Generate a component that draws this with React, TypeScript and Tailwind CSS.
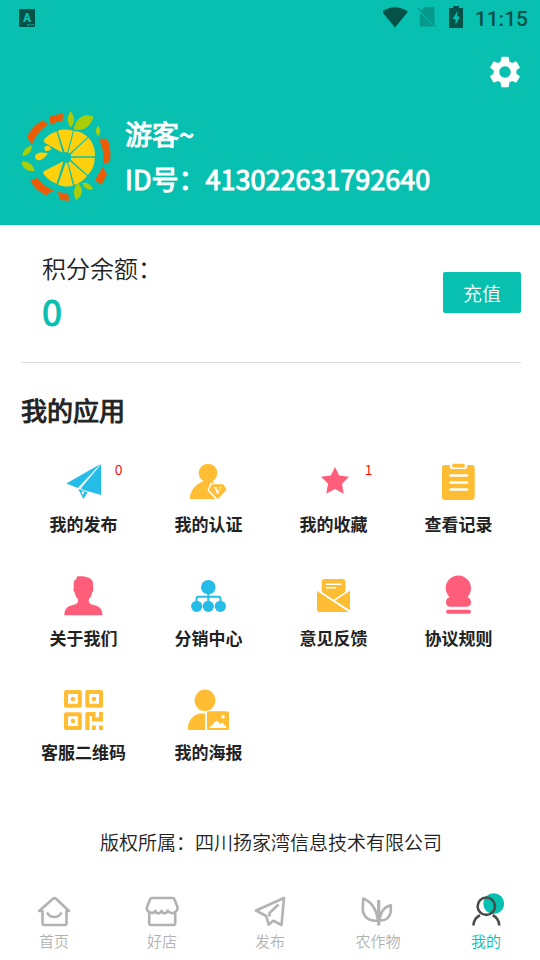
import type { ReactNode } from 'react';
import { MdSettings } from 'react-icons/md';

const apps: { label: string; color: string; badge?: number; icon: ReactNode }[] = [
  {
    label: '我的发布',
    color: 'text-[#25bde8]',
    badge: 0,
    icon: (
      <>
        <path d="M39.5 4 5.3 23.4l11.5 4.6z" />
        <path d="M40.200 4v31l-16.700-4.700-3.800-1.800z" />
        <path d="m17.200 29 2.800.6 6.500 2.800-4 6.600z" />
        <path d="m20.500 31 1.300 4.500 1.500-3.600z" fill="#fff" />
      </>
    ),
  },
  {
    label: '我的认证',
    color: 'text-[#ffbd33]',
    icon: (
      <>
        <circle cx="22" cy="13" r="9.300" />
        <path d="M17 20.500h10l3 6-3 6 4 6.500H5.200c-1 0-1.400-.6-1.200-1.600C4.500 31 9 24 17 21.500z" />
        <path d="M25.500 24.200h11.800l3.200 5.200-8.800 9.800-8.600-9z" stroke="#fff" strokeWidth="3" />
        <path d="M25.900 24.200h11.400l3.400 5.200-8.900 9.800-8.800-9.300z" />
        <text x="31.800" y="34" textAnchor="middle" fontSize="11" fill="#fff" className="font-['Liberation_Serif',serif] font-bold">V</text>
      </>
    ),
  },
  {
    label: '我的收藏',
    color: 'text-[#ff5e7b]',
    badge: 1,
    icon: <path d="m24 7 4.200 8.500 9.800 1.300-7 7 1.700 9.900-8.700-4.600-8.700 4.600L17 23.800l-7-7 9.800-1.300z" />,
  },
  {
    label: '查看记录',
    color: 'text-[#ffbd33]',
    icon: (
      <>
        <path d="M9 5h4.800v1.500a2.500 2.500 0 0 0 2.500 2.500h12.400a2.500 2.500 0 0 0 2.500-2.500V5h4.500a3 3 0 0 1 3 3v29a3 3 0 0 1-3 3H9a3 3 0 0 1-3-3V8a3 3 0 0 1 3-3z" />
        <rect x="16.300" y="3.800" width="12.400" height="3.800" rx="1" />
        <path d="M14.500 15.500H31M14.500 22.500H31M14.500 29.500H31" stroke="#fff" strokeWidth="2.600" strokeLinecap="round" />
      </>
    ),
  },
  {
    label: '关于我们',
    color: 'text-[#ff5e7b]',
    icon: (
      <path d="M16 2.500c5.500-.8 14 .2 15.700 5 .6 2 .3 4.500.3 6.500.8 1 .2 3.500-.8 4.300-.5 3-1.600 5-3.500 7.300 0 2.600.3 4 3 4.800 6.800 1.300 10.800 3.200 10.800 10.900H3.300c0-7.700 4-9.600 10.800-10.900 2.700-.8 3-2.200 3-4.800-1.900-2.300-3-4.300-3.500-7.300-1-.8-1.600-3.300-.8-4.300 0-3-.9-7.500 2.500-9z" />
    ),
  },
  {
    label: '分销中心',
    color: 'text-[#25bde8]',
    icon: (
      <>
        <circle cx="22.300" cy="13.200" r="7.300" />
        <circle cx="10.700" cy="32.300" r="5.600" />
        <circle cx="22.300" cy="32.300" r="5.600" />
        <circle cx="34.400" cy="32.300" r="5.600" />
        <path d="M22.300 18v12M10.500 28v-3.200a2 2 0 0 1 2-2h20a2 2 0 0 1 2 2V28" fill="none" stroke="currentColor" strokeWidth="2" />
      </>
    ),
  },
  {
    label: '意见反馈',
    color: 'text-[#ffbd33]',
    icon: (
      <>
        <path d="M13.500 5h18a3 3 0 0 1 3 3v10L22.500 26 10.700 18V8a3 3 0 0 1 2.800-3z" />
        <path d="M15.500 10.200H30M15.500 13.800h9" stroke="#fff" strokeWidth="1.600" strokeLinecap="round" />
        <path d="M6 16.500 38 38H8a2 2 0 0 1-2-2z" />
        <path d="M39 16.500V36.200L23.800 26.600z" />
        <path d="m6 16 33 21.600" stroke="#fff" strokeWidth="1.600" />
        <path d="M39 16 22.500 26.500" stroke="#fff" strokeWidth="1.400" />
      </>
    ),
  },
  {
    label: '协议规则',
    color: 'text-[#ff5e7b]',
    icon: (
      <>
        <path d="M22.300 1.500c7 0 12.700 5.600 12.700 12.700 0 3.700-1.400 6.200-3.500 9 5 1.400 4.700 9.600-1 9.600H14.500c-5.700 0-6-8.200-1-9.600-2.100-2.800-3.800-5.300-3.800-9 0-7.100 5.600-12.700 12.600-12.700z" />
        <rect x="10" y="35.800" width="25" height="4" rx="2" />
      </>
    ),
  },
  {
    label: '客服二维码',
    color: 'text-[#ffbd33]',
    icon: (
      <>
        <path
          d="M5 4h13.800v13.800H5zM26.300 4h13.700v13.800H26.300zM5 26.200h13.800V40H5z"
          fill="none"
          stroke="currentColor"
          strokeWidth="4"
          strokeLinejoin="round"
        />
        <circle cx="12" cy="11" r="2.300" />
        <circle cx="33" cy="11" r="2.300" />
        <circle cx="12" cy="33" r="2.300" />
        <path d="M25.500 24h9v5.500H38V24h4v9.500H31V28h-2.500v14h-4.200V25.200zM31 37.500h3.800V42H31zM38 37.500h4V42h-4z" />
      </>
    ),
  },
  {
    label: '我的海报',
    color: 'text-[#ffbd33]',
    icon: (
      <>
        <ellipse cx="19" cy="12.300" rx="10.500" ry="10.800" />
        <path d="M19.200 25.500V42H3.500c-1.200 0-1.800-.8-1.700-2C2.300 32 8 25.500 15.500 25.500z" />
        <path d="M22.500 23.300h19a1.500 1.500 0 0 1 1.500 1.500v15.700a1.500 1.500 0 0 1-1.500 1.500h-19a1.500 1.500 0 0 1-1.500-1.500V24.800a1.500 1.500 0 0 1 1.500-1.500z" />
        <path d="m23 40 7.500-7.500 4 3.500 2-1.500L41 40z" fill="#fff" />
        <circle cx="37" cy="28.800" r="1.800" fill="#fff" />
      </>
    ),
  },
];

const tabs: { label: string; icon: ReactNode; active?: boolean }[] = [
  {
    label: '首页',
    icon: (
      <>
        <path d="M6.500 19H3.200L17 6.800q1.500-1.300 3 0L33 19H30.500v12a2 2 0 0 1-2 2h-20a2 2 0 0 1-2-2z" />
        <path d="M11 20.500c3 6 11.500 6 14.500 0" />
      </>
    ),
  },
  {
    label: '好店',
    icon: (
      <>
        <path d="M8 6h20.500a2 2 0 0 1 2 1.400L33.500 15c.7 4-3.500 6.800-7 5.800-1.500-.4-2-1-2.800-2.300-1.300 3.800-5 3.600-6 .3-1.500 3.300-5 3.500-6.200 0C9.500 22.600 1.800 20.500 3 15l3-7.600A2 2 0 0 1 8 6z" />
        <path d="M5.200 21v10a2 2 0 0 0 2 2h22a2 2 0 0 0 2-2V21" />
      </>
    ),
  },
  {
    label: '发布',
    icon: (
      <>
        <path d="M4 18.500 32 6l-2.500 27-8.300-4.300-4.500 4-2.500-8.700z" />
        <path d="m26.500 12.500-9 8.500v3.500" />
      </>
    ),
  },
  {
    label: '农作物',
    icon: (
      <>
        <path d="M3.200 6.500c8 3 13 9.500 14.800 22-9 1.500-15.500-4-15.200-12.500z" />
        <path d="M30.800 13.200c-6.500 1.500-10.500 6-11.300 15.300 6.800.5 11-3.500 11.300-10z" />
        <path d="M18.700 8v25.500" strokeWidth="3.200" />
      </>
    ),
  },
  {
    label: '我的',
    active: true,
    icon: (
      <>
        <circle cx="25.700" cy="11.700" r="10.400" fill="#08c0b0" stroke="none" />
        <circle cx="18.300" cy="14.200" r="8.700" stroke="#4a4a4a" />
        <path d="M5.500 33.500c.2-5 2.500-8.500 6.500-10.300M31.200 33.500c-.2-5-2.500-8.500-6.500-10.300" stroke="#4a4a4a" />
      </>
    ),
  },
];

function OrangeLogo() {
  return (
    <svg viewBox="33 33 270 270" className="size-[90px] shrink-0" role="img" aria-label="头像">
      <g fill="#ffd00c">
        <path d="m102 119c-2 5 2 9 7 12l49 27-18-63c-18 4-29 13-38 24z" />
        <path d="m143 92 21 65h8l17-65c-15-5-31-5-46 0z" />
        <path d="m192 93-17 65 5 2 53-49c-10-10-24-17-41-18z" />
        <path d="m235 113-52 49v7h72c0-23-6-42-20-56z" />
        <path d="M254 173h-71v7l50 45c14-14 21-32 21-52z" />
        <path d="m231 228-51-44-5 3 18 68c15-4 28-14 38-27z" />
        <path d="m189 257-17-69h-5l-23 66c14 6 30 7 45 3z" />
        <path d="m140 251 20-67-56 28c-5 3-6 6-3 10 10 14 23 24 39 29z" />
        <path d="M113 160c-14-4-36-4-38 10 3 18 27 12 38-10z" />
        <path d="M124 148c-3-6-4-11-11-11-9 0-12 7-9 12 4 6 12 4 20-1z" />
      </g>
      <g fill="#ec5c06">
        <path d="m66 134-15-23c11-23 27-39 48-50l16 12c-22 14-39 34-49 61z" />
        <path d="M117 51q20-9 42-10l-1 21q-19 1-35 14z" />
        <path d="M266 116h26c10 23 11 45 8 69l-21 8c3-28 0-52-13-77z" />
        <path d="m278 202 13 21-17 32-19-16z" />
        <path d="m61 242 21-9c15 20 29 29 49 38l-23 15c-21-10-37-25-47-44z" />
        <path d="m143 276 31 5 4 21-28-2z" />
      </g>
      <g fill="#a9ce08">
        <path d="M191 88c5-24 18-38 36-42 9 0 17 2 24 5-12 27-26 45-60 37z" />
        <path d="M182 82c-12-15-11-34 0-48 13 17 14 35 0 48z" />
        <path d="M264 108c-9-10-9-20 0-30 9 10 9 21 0 30z" />
        <path d="M65 136c1 18-10 32-28 31 1-15 12-25 28-31z" />
        <path d="M35 185c15-4 34 6 39 28-20 1-37-5-39-28z" />
        <path d="M205 250c15 16 16 36-7 51-10-21-7-39 7-51z" />
        <path d="M217 248c14-1 25 4 32 20-13 3-26-2-32-20z" />
      </g>
    </svg>
  );
}

function StatusBar() {
  return (
    <div className="flex h-9 items-center pl-[19px] pr-3 text-[#055249]">
      <svg viewBox="0 0 16 18" className="h-[18px] w-4" fill="currentColor" aria-hidden="true">
        <rect width="16" height="18" rx="1" />
        <text x="8" y="13" textAnchor="middle" fontSize="12" fill="#08c0b0" className="font-[Roboto,sans-serif] font-black">A</text>
        <path d="M8 15h2v1.500H8zM11 15h1.500v1.500H11zM13.500 15H15v1.500h-1.500z" fill="#08a093" />
      </svg>
      <svg viewBox="0 0 26 22" className="ml-auto h-[22px] w-[26px]" fill="currentColor" aria-hidden="true">
        <path d="M12 20.500-1 4.800C6.500-1.300 17.500-1.300 25 4.800z" />
      </svg>
      <svg viewBox="0 0 20 22" className="ml-2 h-[22px] w-5 text-[#06998b]" fill="currentColor" aria-hidden="true">
        <path d="M7.500 0H16a1.500 1.500 0 0 1 1.500 1.500v15.800L4 3.800zM2.800 5.500l14 14H4.300a1.500 1.500 0 0 1-1.500-1.500z" />
        <path d="m.8 1 17.800 18.800" stroke="currentColor" strokeWidth="1.500" />
      </svg>
      <svg viewBox="0 1 14 22" className="ml-3 h-[22px] w-[14px] overflow-visible" fill="currentColor" aria-hidden="true">
        <path d="M4 0h6v2h4v20H0V2h4z" />
        <path d="M8.500 5 3.500 13h3v6l4.500-8.500H8z" fill="#08c0b0" />
      </svg>
      <span className="ml-3 pt-0.5 font-[Roboto,sans-serif] text-[21px] leading-none font-medium">11:15</span>
    </div>
  );
}

export default function App() {
  return (
    <div className="flex min-h-screen flex-col bg-white font-['Noto_Sans_CJK_SC',sans-serif] font-[350] text-[#222]">
      <header className="bg-[#08c0b0] pb-6 text-white">
        <StatusBar />
        <div className="flex justify-end pt-[17px] pr-4">
          <button type="button" aria-label="设置">
            <MdSettings size={38} />
          </button>
        </div>
        <div className="mt-5 flex items-center gap-[14px] pl-[21px]">
          <OrangeLogo />
          <div className="text-[27px] leading-[45px] font-normal [-webkit-text-stroke:1px]">
            <p>游客~</p>
            <p>ID号：413022631792640</p>
          </div>
        </div>
      </header>

      <main className="flex-1 pr-[19px] pl-[21px]">
        <section className="flex items-center justify-between border-b border-[#dcdcdc] pt-[23px] pb-[29px] pl-[21px]">
          <div>
            <p className="text-2xl leading-10">积分余额：</p>
            <p className="text-4xl leading-[45px] font-normal text-[#08c0b0] [-webkit-text-stroke:1px]">0</p>
          </div>
          <button type="button" className="mt-1 rounded-xs bg-[#08c0b0] px-5 text-[19px] leading-[41px] text-white">
            充值
          </button>
        </section>

        <h2 className="mt-[27px] text-[26px] leading-10 font-normal [-webkit-text-stroke:1px]">我的应用</h2>

        <div className="mt-[30px] grid grid-cols-4 gap-y-9">
          {apps.map((app) => (
            <a key={app.label} href="#" className="relative flex flex-col items-center">
              <svg viewBox="0 0 45 45" className={`size-[45px] ${app.color}`} fill="currentColor" aria-hidden="true">
                {app.icon}
              </svg>
              <span className="mt-[5px] text-[17px] leading-7 font-bold">{app.label}</span>
              {app.badge !== undefined && (
                <span className="absolute -top-px left-3/4 text-sm leading-5 text-[#f00]">{app.badge}</span>
              )}
            </a>
          ))}
        </div>

        <p className="mt-[61px] text-center text-[19px] leading-[30px]">版权所属：四川扬家湾信息技术有限公司</p>
      </main>

      <nav className="grid grid-cols-5 pb-[6px]">
        {tabs.map((tab) => (
          <a
            key={tab.label}
            href="#"
            className={`flex flex-col items-center text-[15px] leading-[26px] ${tab.active ? 'text-[#08c0b0]' : 'text-[#b2b2b2]'}`}
          >
            <svg
              viewBox="0 0 36 36"
              className="size-9"
              fill="none"
              stroke="currentColor"
              strokeWidth="2.600"
              strokeLinejoin="round"
              aria-hidden="true"
            >
              {tab.icon}
            </svg>
            {tab.label}
          </a>
        ))}
      </nav>
    </div>
  );
}
